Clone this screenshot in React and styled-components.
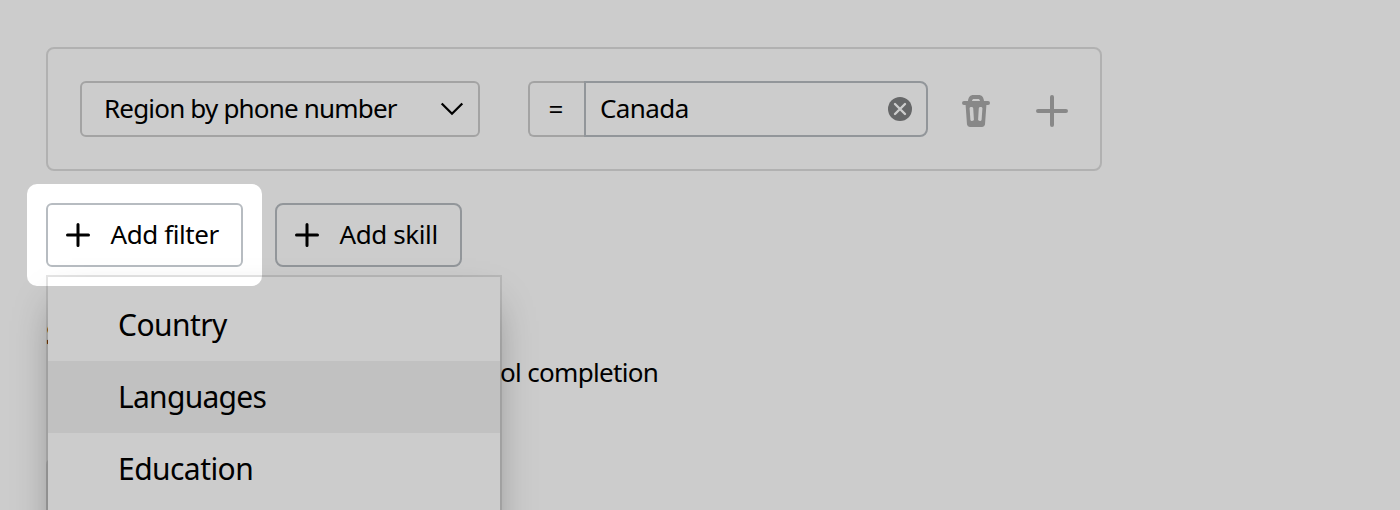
import React from "react";
import styled, { createGlobalStyle } from "styled-components";

const GlobalStyle = createGlobalStyle`
  * { box-sizing: border-box; }
  body {
    margin: 0;
    background: #fff;
    color: #000;
    font-family: "Noto Sans", "Open Sans", sans-serif;
    overflow: hidden;
  }
`;

const Page = styled.main`
  position: relative;
  height: 510px;
  overflow: hidden;
  padding: 47px 0 0 46px;
`;

const Label = styled.span`
  font-size: ${(p) => p.$size || 26}px;
  letter-spacing: ${(p) => p.$track || 0}px;
  line-height: 36px;
  white-space: nowrap;
  padding-bottom: ${(p) => p.$lift || 0}px;
`;

const FilterCard = styled.section`
  display: flex;
  align-items: flex-start;
  width: 1056px;
  height: 124px;
  padding: 32px;
  border: 2px solid #dedede;
  border-radius: 8px;
`;

const Select = styled.div`
  display: flex;
  align-items: center;
  justify-content: space-between;
  width: 400px;
  height: 56px;
  padding: 0 14px 0 22px;
  border: 2px solid #ccc;
  border-radius: 6px;
`;

const Operator = styled.div`
  display: flex;
  align-items: center;
  justify-content: center;
  width: 56px;
  height: 56px;
  margin-left: 48px;
  padding-right: 2px;
  border: 2px solid #ccc;
  border-right: 0;
  border-radius: 6px 0 0 6px;
`;

const ValueField = styled.div`
  display: flex;
  align-items: center;
  justify-content: space-between;
  width: 344px;
  height: 56px;
  padding: 0 14px;
  border: 2px solid #b7bcc1;
  border-radius: 0 8px 8px 0;
`;

const IconSlot = styled.div`
  display: flex;
  align-items: center;
  justify-content: center;
  width: 32px;
  height: 36px;
  margin: 12px 0 0 ${(p) => p.$gap}px;
`;

const Icon = styled.svg`
  display: block;
  flex: none;
`;

const Actions = styled.div`
  display: flex;
  gap: 32px;
  margin-top: 32px;
`;

const ActionButton = styled.div`
  display: flex;
  align-items: center;
  gap: 20.5px;
  width: ${(p) => p.$width}px;
  height: 64px;
  padding-left: 18px;
  border: 2px solid #b7bcc1;
  border-radius: ${(p) => p.$radius}px;
`;

const Details = styled.div`
  display: flex;
  flex-direction: column;
  margin-top: 48px;
`;

const Heading = styled.div`
  font-size: 28px;
  font-weight: 700;
  line-height: 38px;
`;

const Completion = styled.div`
  padding: 1px 0 0 454px;
  line-height: 36px;
`;

const Section = styled.div`
  width: 400px;
  height: 80px;
  margin-top: 63px;
  border: 2px solid #e6e6e6;
  border-radius: 8px;
`;

const Menu = styled.div`
  position: absolute;
  left: 48px;
  top: 277px;
  width: 452px;
  height: 420px;
  padding-top: 12px;
  background: #fff;
  box-shadow: 0 0 0 2px rgba(0, 0, 0, 0.1), 0 20px 40px -10px rgba(0, 0, 0, 0.4);
`;

const MenuItem = styled.div`
  display: flex;
  align-items: center;
  height: 72px;
  padding-left: 70px;
  background: ${(p) => (p.$active ? "#f2f2f2" : "transparent")};
`;

const Spotlight = styled.div`
  position: absolute;
  left: 27px;
  top: 183.5px;
  width: 235px;
  height: 102.5px;
  border-radius: 10px;
  box-shadow: 0 0 0 1500px rgba(0, 0, 0, 0.2);
`;

const ChevronIcon = () => (
  <Icon width="24" height="16" viewBox="0 0 24 16" fill="none" stroke="#000" strokeWidth="2.3">
    <path d="M1.700 2.500 12 12.700 22.300 2.500" />
  </Icon>
);

const PlusIcon = ({ size = 24, color = "#000", weight = 3 }) => (
  <Icon width={size} height={size} viewBox={`0 0 ${size} ${size}`} fill="none" stroke={color} strokeWidth={weight} strokeLinecap="round">
    <path d={`M${size / 2} ${weight / 2}V${size - weight / 2}M${weight / 2} ${size / 2}H${size - weight / 2}`} />
  </Icon>
);

const ClearIcon = () => (
  <Icon width="24" height="24" viewBox="0 0 24 24">
    <circle cx="12" cy="12" r="12" fill="#808182" />
    <path d="m7 7 10 10M17 7 7 17" stroke="#fff" strokeWidth="2.400" strokeLinecap="round" />
  </Icon>
);

const TrashIcon = () => (
  <Icon width="28" height="32" viewBox="0 0 28 32">
    <path
      fill="#ababab"
      fillRule="evenodd"
      d="M6 6C6.300 2 8.500 0 11 0h6c2.500 0 4.700 2 5 6h4a2 2 0 0 1 0 4h-1.600L23 29.500a3 3 0 0 1-3 2.500H8a3 3 0 0 1-3-2.500L3.600 10H2a2 2 0 0 1 0-4ZM10 6h8c-.2-1.500-1-2-2-2h-4c-1 0-1.800.5-2 2ZM7.600 13.400 8.400 24.800c.2 1.700 3.500 1.700 3.500-.2L11.200 13.200c-.2-1.700-3.800-1.500-3.600.2ZM16.800 13.200 16.100 24.600c0 1.900 3.300 1.900 3.500.2l.8-11.400c.2-1.700-3.400-1.900-3.600-.2Z"
    />
  </Icon>
);

const items = [
  { name: "Country", track: -0.55 },
  { name: "Languages", track: -0.72, active: true },
  { name: "Education", track: -0.55 },
];

export default function App() {
  return (
    <>
      <GlobalStyle />
      <Page>
        <FilterCard>
          <Select>
            <Label $track={-0.82} $lift={2}>Region by phone number</Label>
            <ChevronIcon />
          </Select>
          <Operator>
            <Label>=</Label>
          </Operator>
          <ValueField>
            <Label $track={-0.6} $lift={2}>Canada</Label>
            <ClearIcon />
          </ValueField>
          <IconSlot $gap={32}>
            <TrashIcon />
          </IconSlot>
          <IconSlot $gap={44}>
            <PlusIcon size={32} color="#ababab" weight={4} />
          </IconSlot>
        </FilterCard>
        <Actions>
          <ActionButton $width={197} $radius={6}>
            <PlusIcon />
            <Label $track={-0.42} $lift={2}>Add filter</Label>
          </ActionButton>
          <ActionButton $width={187} $radius={8}>
            <PlusIcon />
            <Label $track={-0.4} $lift={2}>Add skill</Label>
          </ActionButton>
        </Actions>
        <Details>
          <Heading>S</Heading>
          <Completion>
            <Label $track={-0.67}>ol completion</Label>
          </Completion>
          <Section />
        </Details>
        <Menu>
          {items.map((item) => (
            <MenuItem key={item.name} $active={item.active}>
              <Label $size={30} $track={item.track}>{item.name}</Label>
            </MenuItem>
          ))}
        </Menu>
        <Spotlight />
      </Page>
    </>
  );
}
